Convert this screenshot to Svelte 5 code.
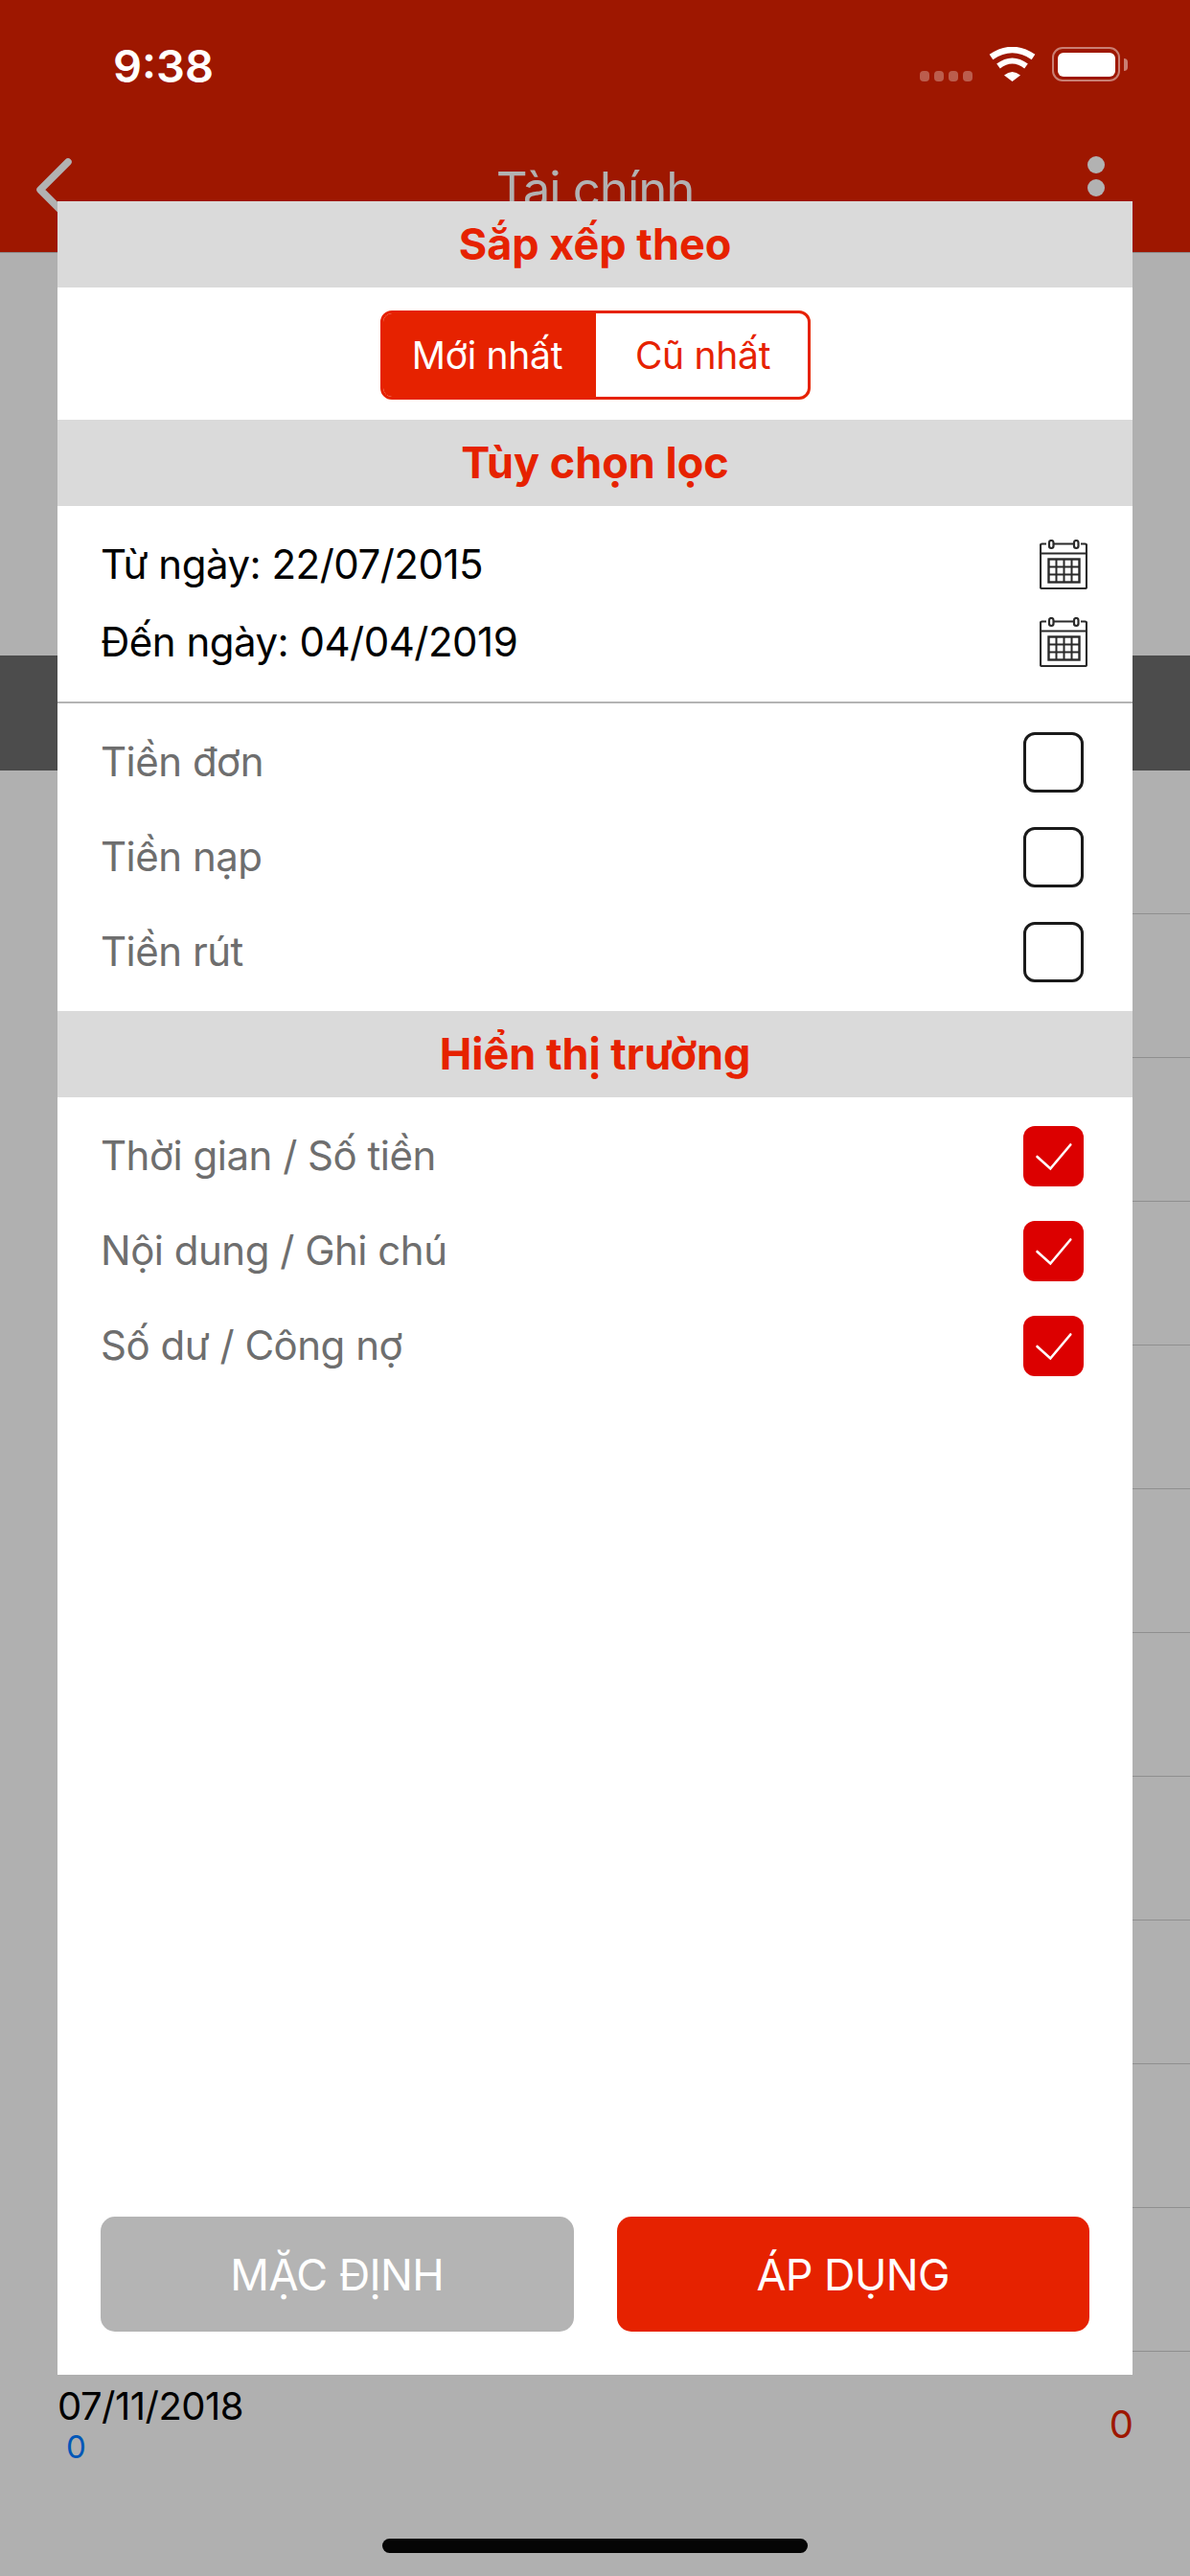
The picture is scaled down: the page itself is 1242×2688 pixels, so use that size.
<script>
  const filters = ['Tiền đơn', 'Tiền nạp', 'Tiền rút'];
  const fields = ['Thời gian / Số tiền', 'Nội dung / Ghi chú', 'Số dư / Công nợ'];
  const dates = ['Từ ngày: 22/07/2015', 'Đến ngày: 04/04/2019'];
  const emptyRows = Array.from({ length: 11 });
</script>

{#snippet calendar()}
  <svg class="cal" viewBox="0 0 50 52" fill="none" stroke="#2a2a2a" stroke-width="2.200">
    <path d="M7 4.500H2.500a1.500 1.500 0 0 0-1.500 1.500V49.500a1.500 1.500 0 0 0 1.500 1.500H47.500a1.500 1.500 0 0 0 1.500-1.500V6a1.500 1.500 0 0 0-1.500-1.500H43" />
    <path d="M15 4.500H35M1 14.500H49" />
    <rect x="10" y="1" width="4.500" height="8" rx="2.200" fill="#fff" />
    <rect x="36" y="1" width="4.500" height="8" rx="2.200" fill="#fff" />
    <rect x="9.500" y="20.500" width="32" height="24" stroke-width="2.400" />
    <path d="M17.500 20.500V44.500M25.500 20.500V44.500M33.500 20.500V44.500M9.500 28.500H41.500M9.500 36.500H41.500" stroke-width="2" />
  </svg>
{/snippet}

<div class="screen">
  <div class="backdrop">
    <header class="nav">
      <div class="navbar">
        <svg class="back" viewBox="0 0 40 66" fill="none" stroke="#b2b2b2" stroke-width="7.500" stroke-linecap="round" stroke-linejoin="round"><path d="M35 4L6 33L35 62" /></svg>
        <span class="title">Tài chính</span>
        <div class="dots"><i></i><i></i><i></i></div>
      </div>
    </header>
    <div class="summary"></div>
    <div class="band"></div>
    {#each emptyRows as _}
      <div class="row"></div>
    {/each}
    <div class="row last">
      <div class="rowtext">
        <div class="date">07/11/2018</div>
        <div class="blue">0</div>
      </div>
      <div class="red">0</div>
    </div>
  </div>

  <div class="status">
    <span class="time">9:38</span>
    <div class="sysicons">
      <div class="signal"><i></i><i></i><i></i><i></i></div>
      <svg class="wifi" viewBox="0 0 49 36" fill="none" stroke="#fff">
        <path d="M2.500 10.500Q24.500 -4.500 46.500 10.500" stroke-width="6.500" />
        <path d="M10 20Q24.500 9 39 20" stroke-width="6" />
        <path d="M16 29.500Q24.500 22.500 33 29.500L24.500 36Z" fill="#fff" stroke="none" />
      </svg>
      <div class="battery"><div class="level"></div></div>
      <div class="nub"></div>
    </div>
  </div>

  <div class="modal">
    <h2>Sắp xếp theo</h2>
    <div class="segwrap">
      <div class="seg">
        <span class="on">Mới nhất</span>
        <span class="off">Cũ nhất</span>
      </div>
    </div>
    <h2>Tùy chọn lọc</h2>
    <div class="dates">
      {#each dates as d}
        <div class="daterow"><span>{d}</span>{@render calendar()}</div>
      {/each}
    </div>
    <div class="filters">
      {#each filters as f}
        <div class="opt"><span>{f}</span><div class="box"></div></div>
      {/each}
    </div>
    <h2>Hiển thị trường</h2>
    <div class="fields">
      {#each fields as f}
        <div class="opt">
          <span>{f}</span>
          <div class="box checked">
            <svg viewBox="0 0 63 63" fill="none" stroke="#fff" stroke-width="2.600" stroke-linecap="round"><path d="M14.500 32L28.300 44.500L49.300 19.500" /></svg>
          </div>
        </div>
      {/each}
    </div>
    <div class="actions">
      <button class="secondary">MẶC ĐỊNH</button>
      <button class="primary">ÁP DỤNG</button>
    </div>
  </div>

  <div class="home"></div>
</div>

<style>
  :global(body) { margin: 0; background: #b0b0b0; }
  .screen {
    position: relative;
    width: 1242px;
    height: 2688px;
    overflow: hidden;
    font-family: Inter, "Noto Sans", sans-serif;
    background: #b0b0b0;
  }
  .nav {
    height: 263px;
    background: #9e1700;
    border-bottom: 1px solid #8c8c8c;
    display: flex;
    flex-direction: column;
    justify-content: flex-end;
  }
  .navbar {
    position: relative;
    height: 132px;
    display: flex;
    justify-content: center;
  }
  .title {
    margin-top: 36px;
    font-size: 51px;
    line-height: 62px;
    letter-spacing: -1.1px;
    color: #b2b2b2;
  }
  .back { position: absolute; left: 36px; top: 34px; width: 40px; height: 66px; }
  .dots { position: absolute; left: 1135px; top: 32px; display: flex; flex-direction: column; gap: 6px; }
  .dots i { width: 18px; height: 18px; border-radius: 50%; background: #b2b2b2; }
  .summary { height: 420px; }
  .band { height: 120px; background: #4c4c4c; }
  .row { height: 149px; margin-left: 60px; border-bottom: 1px solid #8f8f8f; }
  .row.last {
    border: 0;
    margin-left: 0;
    display: flex;
    justify-content: space-between;
    padding: 0 59px 0 60px;
  }
  .date { margin-top: 33px; font-size: 40px; line-height: 48px; letter-spacing: -0.5px; color: #000; }
  .blue { margin: -2px 0 0 9px; font-size: 33px; line-height: 40px; color: #0057b8; }
  .red { margin-top: 52px; font-size: 40px; line-height: 48px; color: #9e1700; }

  .status {
    position: absolute;
    inset: 0 0 auto 0;
    height: 132px;
  }
  .time {
    position: absolute;
    left: 118px;
    top: 40px;
    font-size: 47px;
    line-height: 57px;
    font-weight: 600;
    color: #fff;
  }
  .sysicons { position: absolute; left: 960px; top: 49px; width: 220px; height: 36px; display: flex; align-items: flex-end; }
  .signal { display: flex; gap: 5px; width: 72px; }
  .signal i { width: 10px; height: 11px; border-radius: 4px; background: rgba(255, 255, 255, 0.3); }
  .wifi { width: 49px; height: 36px; }
  .battery {
    box-sizing: border-box;
    width: 71px;
    height: 36px;
    margin-left: 17px;
    padding: 4px 3px 3px 4px;
    border: 2px solid rgba(255, 255, 255, 0.45);
    border-radius: 11px;
  }
  .level { height: 100%; background: #fff; border-radius: 6px; }
  .nub { width: 4px; height: 13px; margin: 0 0 11px 4px; background: rgba(255, 255, 255, 0.45); border-radius: 0 4px 4px 0; }

  .modal {
    position: absolute;
    left: 60px;
    top: 210px;
    width: 1122px;
    height: 2268px;
    background: #fff;
    display: flex;
    flex-direction: column;
  }
  h2 {
    margin: 0;
    height: 90px;
    flex: none;
    background: #dadada;
    color: #e62200;
    font-size: 45px;
    font-weight: 700;
    line-height: 90px;
    text-align: center;
  }
  .segwrap { height: 138px; box-sizing: border-box; padding-top: 24px; display: flex; justify-content: center; }
  .seg {
    box-sizing: border-box;
    width: 449px;
    height: 93px;
    display: flex;
    border: 3px solid #e62200;
    border-radius: 12px;
    overflow: hidden;
    color: #e62200;
    font-size: 39px;
    line-height: 87px;
    letter-spacing: -0.3px;
    text-align: center;
  }
  .seg .off { flex: 1; padding-left: 3px; }
  .seg .on { flex: none; box-sizing: border-box; width: 222px; padding-right: 4px; background: #e62200; color: #fff; }
  .dates {
    padding: 20px 47px 22px 45px;
    border-bottom: 2px solid #b4b4b4;
    display: flex;
    flex-direction: column;
  }
  .daterow {
    height: 81px;
    display: flex;
    justify-content: space-between;
    align-items: center;
    font-size: 42px;
    letter-spacing: -0.5px;
    color: #000;
  }
  .cal { width: 50px; height: 52px; }
  .filters { padding: 12px 0 12px; }
  .fields { padding-top: 12px; }
  .opt {
    height: 99px;
    padding: 0 51px 0 45px;
    display: flex;
    justify-content: space-between;
    align-items: center;
    font-size: 42px;
    letter-spacing: -0.5px;
    color: #6e6e6e;
  }
  .opt span { margin-bottom: 2px; }
  .box {
    box-sizing: border-box;
    width: 63px;
    height: 63px;
    border: 3px solid #1a1a1a;
    border-radius: 12px;
  }
  .box.checked { border: 0; background: #dc0000; }
  .box svg { display: block; width: 63px; height: 63px; }
  .actions { margin-top: auto; padding: 0 45px 45px; display: flex; gap: 45px; }
  button {
    flex: 1;
    height: 120px;
    border: 0;
    border-radius: 15px;
    color: #fff;
    font-family: inherit;
    font-size: 45px;
    letter-spacing: -0.6px;
    padding: 0;
  }
  .secondary { background: #b4b4b4; }
  .primary { background: #e62200; }
  .home {
    position: absolute;
    left: 399px;
    top: 2649px;
    width: 444px;
    height: 15px;
    border-radius: 8px;
    background: #050505;
  }
</style>
